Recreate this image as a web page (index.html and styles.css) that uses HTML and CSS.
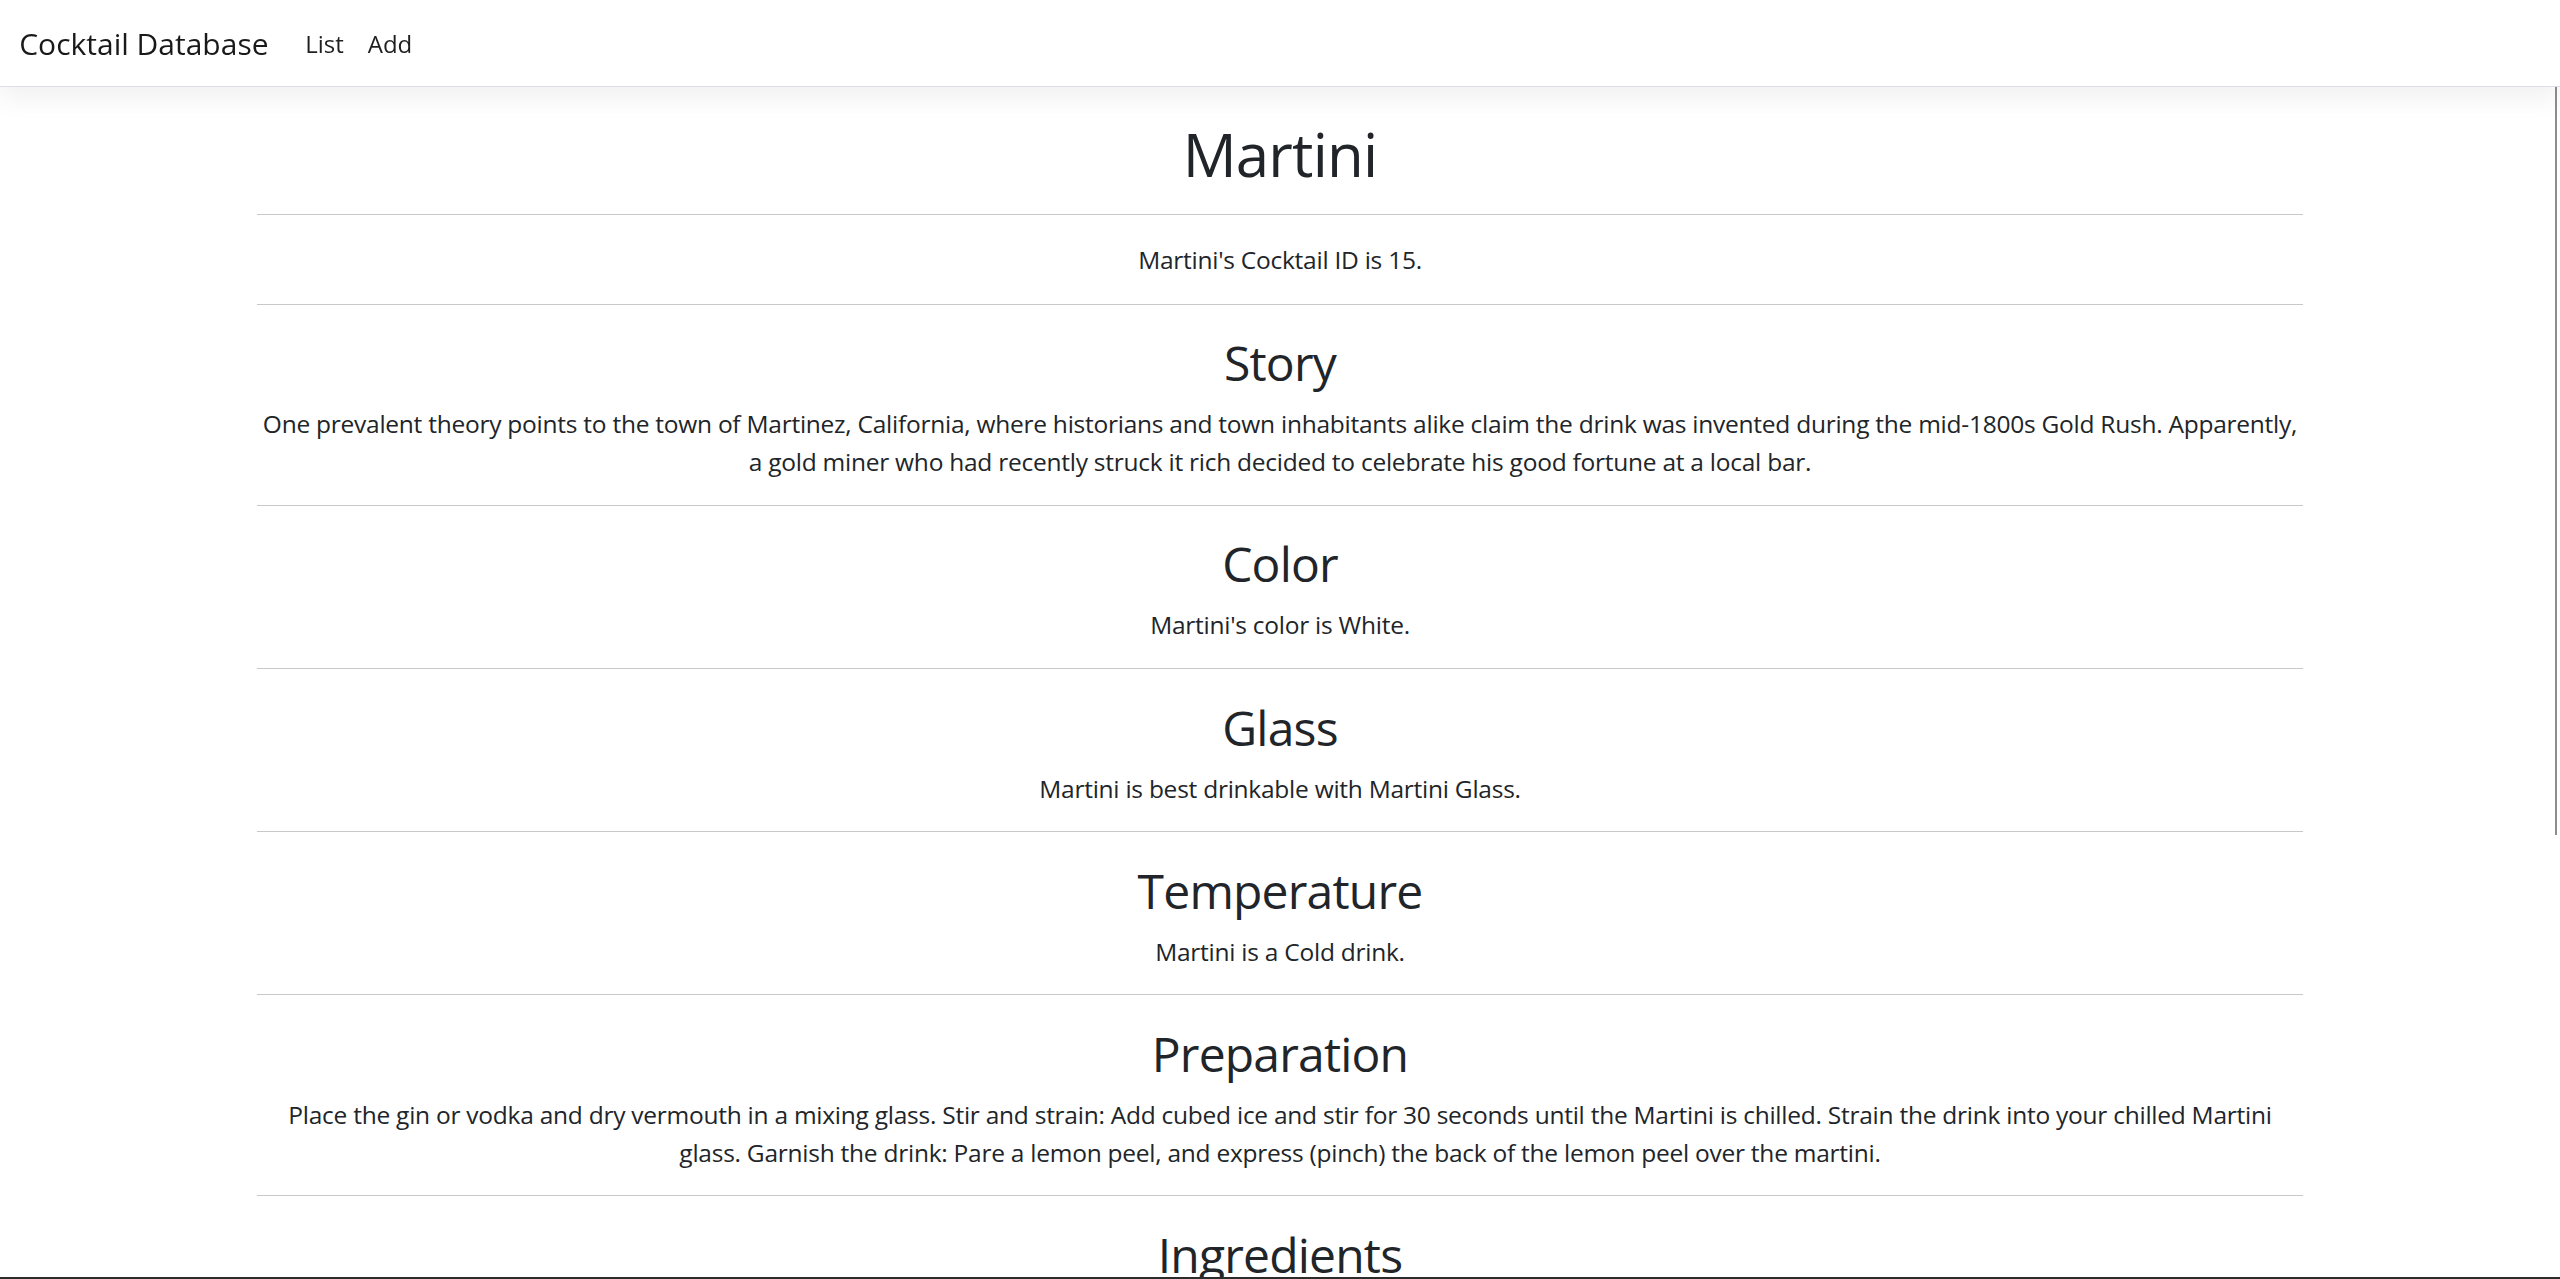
FILE: index.html
```html
<!DOCTYPE html>
<html lang="en">
<head>
<meta charset="utf-8">
<title>Martini - Cocktail Database</title>
<link rel="stylesheet" href="styles.css">
</head>
<body>
<nav class="navbar">
  <a class="brand" href="#">Cocktail Database</a>
  <ul class="nav">
    <li><a class="nav-link" href="#">List</a></li>
    <li><a class="nav-link" href="#">Add</a></li>
  </ul>
</nav>
<main class="container">
  <h1 class="title">Martini</h1>
  <hr class="first">
  <p class="cocktail-id">Martini's Cocktail ID is 15.</p>
  <hr>
  <section class="block">
    <h2>Story</h2>
    <p>One prevalent theory points to the town of Martinez, California, where historians and town inhabitants alike claim the drink was invented during the mid-1800s Gold Rush. Apparently, a gold miner who had recently struck it rich decided to celebrate his good fortune at a local bar.</p>
  </section>
  <hr>
  <section class="block">
    <h2>Color</h2>
    <p>Martini's color is White.</p>
  </section>
  <hr class="thick">
  <section class="block">
    <h2>Glass</h2>
    <p>Martini is best drinkable with Martini Glass.</p>
  </section>
  <hr class="thick">
  <section class="block">
    <h2>Temperature</h2>
    <p>Martini is a Cold drink.</p>
  </section>
  <hr>
  <section class="block">
    <h2>Preparation</h2>
    <p>Place the gin or vodka and dry vermouth in a mixing glass. Stir and strain: Add cubed ice and stir for 30 seconds until the Martini is chilled. Strain the drink into your chilled Martini glass. Garnish the drink: Pare a lemon peel, and express (pinch) the back of the lemon peel over the martini.</p>
  </section>
  <hr>
  <section class="block">
    <h2>Ingredients</h2>
  </section>
</main>
<div class="scroll-thumb"></div>
<div class="bottom-edge"></div>
</body>
</html>
```

FILE: styles.css
```css
html, body {
  margin: 0;
  padding: 0;
  background: #ffffff;
}

body {
  font-family: "Open Sans", "Noto Sans", sans-serif;
  color: #212529;
  font-size: 24.5px;
  line-height: 37.6px;
  overflow: hidden;
}

a {
  text-decoration: none;
}

.navbar {
  position: relative;
  z-index: 2;
  display: flex;
  align-items: center;
  padding: 11px 19.2px;
  background: #ffffff;
  border-bottom: 1px solid #dedde6;
  box-shadow: 0 12px 24px rgba(0, 0, 0, 0.06);
}

.brand {
  font-size: 30px;
  line-height: 48px;
  padding: 9px 0 7px;
  margin-right: 24.6px;
  color: rgba(0, 0, 0, 0.9);
}

.nav {
  display: flex;
  list-style: none;
  margin: 0;
  padding: 0;
}

.nav-link {
  display: block;
  padding: 13px 12px 11px;
  font-size: 24px;
  line-height: 38.4px;
  color: rgba(0, 0, 0, 0.88);
}

.container {
  max-width: 2046px;
  margin: 0 auto;
  padding-top: 29.2px;
  text-align: center;
}

.title {
  margin: 0;
  font-size: 60px;
  line-height: 76.8px;
  font-weight: 400;
  letter-spacing: -0.8px;
}

hr {
  margin: 24.1px 0 25.6px;
  border: 0;
  border-top: 1px solid #212529;
  opacity: 0.25;
}

hr.first {
  margin-top: 21px;
}

hr.thick {
  border-top-width: 1.6px;
}

p {
  margin: 0;
  letter-spacing: -0.25px;
}

.cocktail-id {
  margin-bottom: 25.6px;
}

.block h2 {
  margin: 0 0 11.3px;
  padding-top: 3px;
  font-size: 48px;
  line-height: 60.7px;
  font-weight: 400;
  letter-spacing: -0.8px;
}

.block p {
  margin-bottom: 24.1px;
}

.scroll-thumb {
  position: fixed;
  top: 10px;
  right: 3px;
  width: 2px;
  height: 825px;
  background: #8d8d8d;
}

.bottom-edge {
  position: fixed;
  left: 0;
  right: 0;
  bottom: 0;
  height: 2px;
  background: #2b2b2b;
}
```
